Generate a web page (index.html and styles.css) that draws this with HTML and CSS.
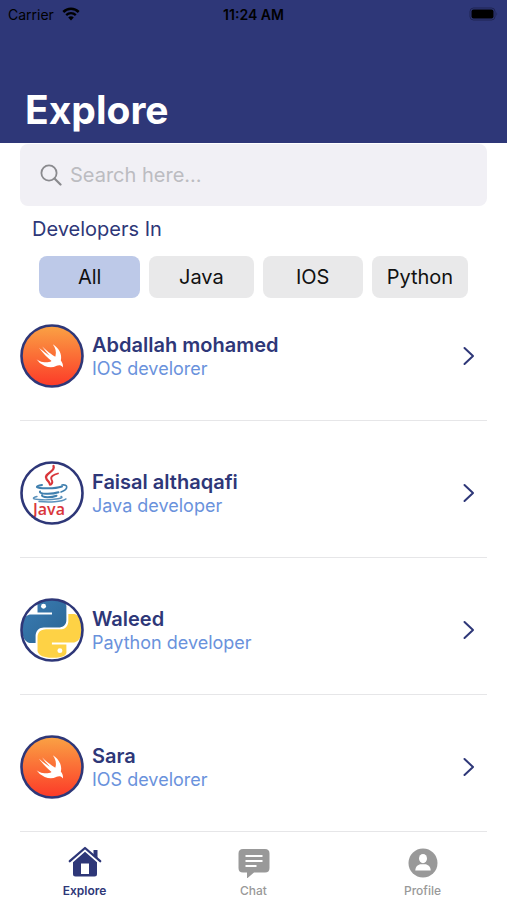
FILE: index.html
```html
<!DOCTYPE html>
<html lang="en">
<head>
<meta charset="utf-8">
<meta name="viewport" content="width=device-width, initial-scale=1">
<title>Explore</title>
<link rel="stylesheet" href="styles.css">
</head>
<body>
<svg class="defs" aria-hidden="true">
  <defs>
    <linearGradient id="swift-bg" x1="0" y1="0" x2="0" y2="1">
      <stop offset="0" stop-color="#faa244"/>
      <stop offset="1" stop-color="#fc3a28"/>
    </linearGradient>
    <linearGradient id="py-blue" x1="0" y1="0" x2="1" y2="1">
      <stop offset="0" stop-color="#3b7db5"/>
      <stop offset="1" stop-color="#2a6492"/>
    </linearGradient>
    <clipPath id="disc"><circle cx="32" cy="32" r="30"/></clipPath>
    <symbol id="swift" viewBox="0 0 64 64">
      <circle cx="32" cy="32" r="30" fill="url(#swift-bg)"/>
      <path transform="translate(13 15.5) scale(1.46 1.42)" fill="#fff" d="M13.54 3.41c4.11 2.47 6.545 7.162 5.549 11.131-.024.093-.05.181-.076.272l.002.001c2.062 2.538 1.5 5.258 1.236 4.745-1.072-2.086-3.066-1.568-4.088-1.043a6.803 6.803 0 0 1-.281.158l-.02.012-.002.002c-2.115 1.123-4.957 1.205-7.812-.022a12.568 12.568 0 0 1-5.64-4.838c.649.48 1.35.902 2.097 1.252 3.019 1.414 6.051 1.311 8.197-.002C9.651 12.73 7.101 9.67 5.146 7.191a10.628 10.628 0 0 1-1.005-1.384c2.34 2.142 6.038 4.83 7.365 5.576C8.69 8.408 6.208 4.743 6.324 4.86c4.436 4.466 8.527 6.996 8.527 6.996.154.085.27.154.36.213.085-.215.16-.437.224-.668.708-2.588-.09-5.548-1.893-7.992z"/>
      <circle cx="32" cy="32" r="30.5" fill="none" stroke="#2e3778" stroke-width="2.6"/>
    </symbol>
    <symbol id="java" viewBox="0 0 64 64">
      <circle cx="32" cy="32" r="30" fill="#fff"/>
      <g fill="none" stroke-linecap="round">
        <path d="M33.500 5c2.500 6-10.500 7.500-7 13 1 2 3 3 3.500 5.500" stroke="#d9363a" stroke-width="2.300"/>
        <path d="M38 12.500c-4 1-8 3-6.500 6 1 1.600 2 3-.5 5" stroke="#d9363a" stroke-width="1.800"/>
        <path d="M22 24c-8 1.500-7 3.500 6 3.300 6 0 11-.8 14-1.800" stroke="#3f7fae" stroke-width="2"/>
        <path d="M42 24c6-1 7 4-1 7" stroke="#3f7fae" stroke-width="1.600"/>
        <path d="M20 30.500c-1.500 2.800 12 3 18.500.8M22 34.300c0 2.400 9 2.500 14.500.4" stroke="#3f7fae" stroke-width="2"/>
        <path d="M17 35.500c-12 3 9 4.300 21 2.300 4-.7 5-1.700 3-2.300M19 40.500c10 1 23 .5 27-2.600" stroke="#5a91bb" stroke-width="1.400"/>
      </g>
      <text x="13" y="54" fill="#d9363a" font-family="Open Sans, Noto Sans, sans-serif" font-weight="600" font-size="16">Java</text>
      <circle cx="32" cy="32" r="30.500" fill="none" stroke="#2e3778" stroke-width="2.600"/>
    </symbol>
    <symbol id="python" viewBox="0 0 64 64">
      <circle cx="32" cy="32" r="30" fill="#fff"/>
      <g clip-path="url(#disc)">
        <g transform="translate(2.200 1.200) scale(2.480 2.440)">
          <path fill="url(#py-blue)" d="M14.25.18l.9.2.73.26.59.3.45.32.34.34.25.34.16.33.1.3.04.26.02.2-.01.13V8.5l-.05.63-.13.55-.21.46-.26.38-.3.31-.33.25-.35.19-.35.14-.33.1-.3.07-.26.04-.21.02H8.77l-.69.05-.59.14-.5.22-.41.27-.33.32-.27.35-.2.36-.15.37-.1.35-.07.32-.04.27-.02.21v3.06H3.17l-.21-.03-.28-.07-.32-.12-.35-.18-.36-.26-.36-.36-.35-.46-.32-.59-.28-.73-.21-.88-.14-1.05-.05-1.23.06-1.22.16-1.04.24-.87.32-.71.36-.57.4-.44.42-.33.42-.24.4-.16.36-.1.32-.05.24-.01h.16l.06.01h8.16v-.83H6.18l-.01-2.75-.02-.37.05-.34.11-.31.17-.28.25-.26.31-.23.38-.2.44-.18.51-.15.58-.12.64-.1.71-.06.77-.04.84-.02 1.27.05z"/>
          <path fill="#fed245" d="M21.040 6.110l.28.06.32.12.35.18.36.27.36.35.35.47.32.59.28.73.21.88.14 1.040.05 1.230-.06 1.230-.16 1.040-.24.86-.32.71-.36.57-.4.45-.42.33-.42.24-.4.16-.36.09-.32.05-.24.02-.16-.01h-8.220v.82h5.840l.01 2.760.02.36-.05.34-.11.31-.17.29-.25.25-.31.24-.38.2-.44.17-.51.15-.58.13-.64.09-.71.07-.77.04-.84.01-1.270-.04-1.070-.14-.9-.2-.73-.25-.59-.3-.45-.33-.34-.34-.25-.34-.16-.33-.1-.3-.04-.25-.02-.2.01-.13v-5.340l.05-.64.13-.54.21-.46.26-.38.3-.32.33-.24.35-.2.35-.14.33-.1.3-.06.26-.04.21-.02.13-.01h5.840l.69-.05.59-.14.5-.21.41-.28.33-.32.27-.35.2-.36.15-.36.1-.35.07-.32.04-.28.02-.21V6.070h2.090l.14.01z"/>
          <circle cx="8.600" cy="2.900" r="1" fill="#fff"/>
          <circle cx="15.200" cy="21.100" r="1" fill="#fff"/>
        </g>
      </g>
      <circle cx="32" cy="32" r="30.500" fill="none" stroke="#2e3778" stroke-width="2.600"/>
    </symbol>
    <symbol id="chevron" viewBox="0 0 12 20">
      <path d="M1.500 2l8.500 8-8.500 8" fill="none" stroke="#2e3778" stroke-width="2" stroke-linecap="round" stroke-linejoin="round"/>
    </symbol>
  </defs>
</svg>

<header class="header">
  <div class="status">
    <span class="carrier">Carrier
      <svg width="18" height="14" viewBox="0 0 18 14" aria-hidden="true">
        <path d="M1.300 5C5.500.8 12.500.8 16.700 5" fill="none" stroke="#000" stroke-width="2.500"/>
        <path d="M4.200 8.100c2.700-2.600 6.900-2.600 9.600 0" fill="none" stroke="#000" stroke-width="2.300"/>
        <path d="M6.200 10.400c1.600-1.500 4-1.500 5.600 0L9 13.400z"/>
      </svg>
    </span>
    <span class="time">11:24 AM</span>
    <svg class="battery" width="30" height="14" viewBox="0 0 30 14" aria-hidden="true">
      <rect x="1" y="1" width="25" height="12" rx="3.500" fill="none" stroke="#1f2552" stroke-width="1"/>
      <rect x="2.500" y="2.500" width="22" height="9" rx="2"/>
      <path d="M27.500 5v4q1.500-2 0-4" fill="#1f2552"/>
    </svg>
  </div>
  <h1>Explore</h1>
</header>

<main>
  <label class="search">
    <svg width="22" height="22" viewBox="0 0 22 22" aria-hidden="true">
      <circle cx="9" cy="9" r="7.600" fill="none" stroke="#8a8a8e" stroke-width="1.800"/>
      <path d="M14.500 14.500l6 6" stroke="#8a8a8e" stroke-width="2.200" stroke-linecap="round"/>
    </svg>
    <input type="search" placeholder="Search here..." aria-label="Search here">
  </label>

  <h2>Developers In</h2>
  <div class="filters">
    <button class="chip active" type="button">All</button>
    <button class="chip" type="button">Java</button>
    <button class="chip" type="button">IOS</button>
    <button class="chip" type="button">Python</button>
  </div>

  <ul class="list">
    <li><a href="#abdallah">
      <svg class="avatar" aria-hidden="true"><use href="#swift"/></svg>
      <span class="who"><strong>Abdallah mohamed</strong><span>IOS develorer</span></span>
      <svg class="chevron" aria-hidden="true"><use href="#chevron"/></svg>
    </a></li>
    <li><a href="#faisal">
      <svg class="avatar" aria-hidden="true"><use href="#java"/></svg>
      <span class="who"><strong>Faisal althaqafi</strong><span>Java developer</span></span>
      <svg class="chevron" aria-hidden="true"><use href="#chevron"/></svg>
    </a></li>
    <li><a href="#waleed">
      <svg class="avatar" aria-hidden="true"><use href="#python"/></svg>
      <span class="who"><strong>Waleed</strong><span>Paython developer</span></span>
      <svg class="chevron" aria-hidden="true"><use href="#chevron"/></svg>
    </a></li>
    <li><a href="#sara">
      <svg class="avatar" aria-hidden="true"><use href="#swift"/></svg>
      <span class="who"><strong>Sara</strong><span>IOS develorer</span></span>
      <svg class="chevron" aria-hidden="true"><use href="#chevron"/></svg>
    </a></li>
  </ul>
</main>

<nav class="tabs">
  <a class="current" href="#explore">
    <svg width="34" height="32" viewBox="0 0 34 32" aria-hidden="true">
      <path d="M1.800 15.200L17 2l15.200 13.200" fill="none" stroke="currentColor" stroke-width="2.300" stroke-linecap="round" stroke-linejoin="round"/>
      <path d="M25.500 4h4v9l-4-3.500z" fill="currentColor"/>
      <path fill="currentColor" fill-rule="evenodd" d="M17 5.800l12 10.400V28q0 2.500-2.500 2.500h-19Q5 30.500 5 28V16.200zM13 17.500v10.500h8V17.500z"/>
    </svg>
    Explore
  </a>
  <a href="#chat">
    <svg width="34" height="32" viewBox="0 0 34 32" aria-hidden="true">
      <path fill="currentColor" d="M6 3h22q4.500 0 4.500 4.500v14.500q0 4.500-4.500 4.500H17l-7 6v-6H6q-4.500 0-4.500-4.500V7.500Q1.500 3 6 3z"/>
      <path d="M8.500 10h17M8.500 15h17M8.500 20h11" stroke="#fff" stroke-width="1.800"/>
    </svg>
    Chat
  </a>
  <a href="#profile">
    <svg width="34" height="32" viewBox="0 0 34 32" aria-hidden="true">
      <circle cx="17" cy="17" r="14.500" fill="currentColor"/>
      <ellipse cx="17" cy="12.600" rx="4" ry="4.600" fill="#fff"/>
      <path fill="#fff" d="M9.300 24.500c0-4 2.700-5.800 5-6.300h5.400c2.300.5 5 2.300 5 6.300z"/>
    </svg>
    Profile
  </a>
</nav>
</body>
</html>
```
FILE: styles.css
```css
* { box-sizing: border-box; }

body {
  margin: 0;
  min-height: 100vh;
  display: flex;
  flex-direction: column;
  background: #fff;
  color: #000;
  font-family: Inter, "Liberation Sans", sans-serif;
}

.defs { position: absolute; width: 0; height: 0; }

a { color: inherit; text-decoration: none; }

.header {
  background: #2e3778;
  padding: 4px 8px 8px;
}

.status {
  display: grid;
  grid-template-columns: 1fr auto 1fr;
  align-items: center;
  height: 20px;
  font-size: 14px;
}

.carrier { display: flex; align-items: center; gap: 8px; }
.time { font-weight: 600; }
.battery { justify-self: end; }

h1 {
  margin: 61px 0 0 17px;
  font-size: 39px;
  line-height: 50px;
  font-weight: 700;
  color: #fff;
}

main { padding: 0 20px; }

.search {
  display: flex;
  align-items: center;
  gap: 8px;
  height: 62px;
  margin-top: 1px;
  padding: 0 20px;
  border-radius: 8px;
  background: #f1f0f5;
}

.search input {
  flex: 1;
  min-width: 0;
  padding: 0;
  border: 0;
  outline: 0;
  background: none;
  font: inherit;
  font-size: 20px;
}

.search input::placeholder { color: #bcbcc1; }

h2 {
  margin: 11px 0 15px 12px;
  font-size: 20px;
  line-height: 24px;
  font-weight: 400;
  color: #2e3778;
}

.filters {
  display: grid;
  grid-template-columns: 101fr 104fr 100fr 96fr;
  gap: 9px;
  margin: 0 19px;
}

.chip {
  height: 42px;
  padding: 0;
  border: 0;
  border-radius: 8px;
  background: #e9e9ea;
  color: #111;
  font: inherit;
  font-size: 20px;
}

.chip.active { background: #bdc9e8; }

.list { list-style: none; margin: 0; padding: 0; }

.list a {
  display: flex;
  align-items: center;
  gap: 8px;
  padding: 40px 11px 32px 0;
  border-bottom: 1px solid #e6e6e8;
}

.list li:first-child a { padding-top: 26px; }

.avatar { width: 64px; height: 64px; flex: none; }
.chevron { width: 14px; height: 20px; flex: none; }

.who {
  flex: 1;
  display: flex;
  flex-direction: column;
  font-size: 18px;
  line-height: 23px;
  color: #6a92dc;
}

.who strong {
  font-size: 20px;
  line-height: 24px;
  font-weight: 600;
  color: #2e3778;
}

.tabs {
  display: grid;
  grid-template-columns: repeat(3, 1fr);
  padding-top: 14px;
}

.tabs a {
  display: flex;
  flex-direction: column;
  align-items: center;
  gap: 5px;
  font-size: 12px;
  line-height: 16px;
  font-weight: 500;
  color: #999;
}

.tabs .current { color: #2e3778; font-weight: 600; }
```
